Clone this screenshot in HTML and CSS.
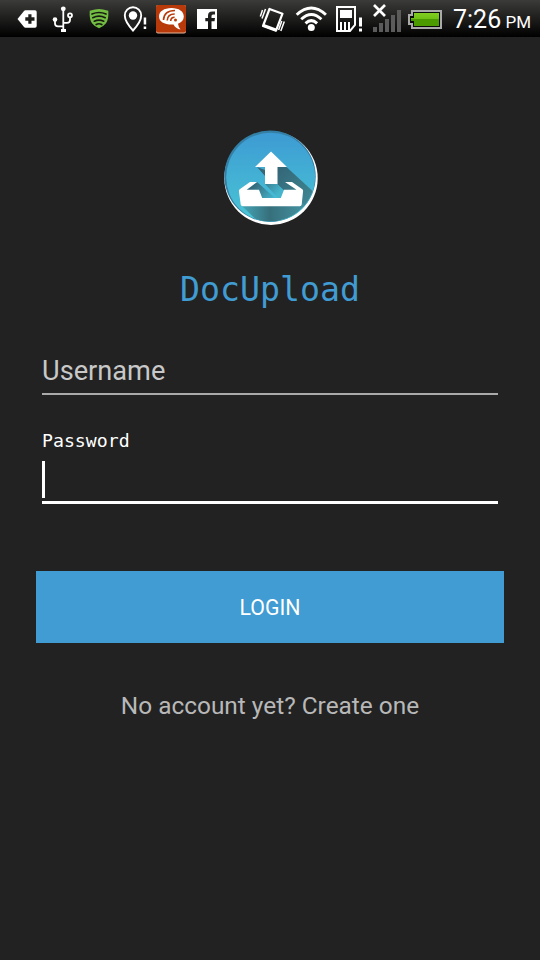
FILE: index.html
```html
<!DOCTYPE html>
<html lang="en">
<head>
<meta charset="utf-8">
<title>DocUpload</title>
<link rel="stylesheet" href="styles.css">
</head>
<body>
<header class="status">
  <div class="icons">
    <svg viewBox="9 0 36 37"><path fill="#fff" fill-rule="evenodd" d="M17.5 19 24 11q.5-.7 1.500-.7H35q1.700 0 1.700 1.700V26q0 1.700-1.700 1.700h-9.500q-1 0-1.500-.7ZM28.300 14.300v3h-3v3.400h3v3h3.200v-3h3v-3.400h-3v-3Z"/></svg>
    <svg viewBox="45 0 36 37"><g fill="none" stroke="#fff" stroke-width="1.800"><path d="M63.300 8v22M55 21v2.500q0 2.800 3 2.800h5.500M70 18v2q0 2.800-3 2.800h-3.500"/><circle cx="70" cy="15.300" r="2"/></g><path fill="#fff" d="M61 29h5v3h-5z"/><circle cx="63.300" cy="8.800" r="2.400" fill="#fff"/><circle cx="55" cy="19.500" r="2.300" fill="#fff"/></svg>
    <svg viewBox="81 0 36 37"><path fill="#74bd43" d="M99 9q3.500 0 9.300 1.800.5 9-2.300 12.500-2.700 3.500-7 5-4.300-1.500-7-5-2.800-3.500-2.300-12.500Q95.500 9 99 9Z"/><g fill="none" stroke="#171b12" stroke-width="1.700" stroke-linecap="round"><path d="M92 14q7-3 14 0M92.800 17.700q6.200-3 12.400 0M94.300 21.200q4.700-2.200 9.400 0M96.200 24.500q2.800-1.500 5.600 0"/></g></svg>
    <svg viewBox="117 0 36 37"><path fill="#222" stroke="#fff" stroke-width="1.900" d="M133 30.500Q124.800 21.500 124.800 15.500A8.200 8.200 0 0 1 141.200 15.500Q141.200 21.500 133 30.500Z"/><circle cx="133" cy="15.500" r="4.200" fill="#fff"/><path fill="#fff" d="M143.700 17.500h2.500v7h-2.500zM143.700 26.500h2.500V29h-2.500z"/></svg>
    <svg viewBox="153 0 36 37"><rect x="156" y="5" width="30" height="28.500" rx="2" fill="#e3b49a"/><rect x="156" y="5" width="30" height="27.500" rx="2" fill="#b83a0b"/><path fill="#fff" d="M171.500 8c7.500 0 12.300 3.500 12.300 8.500 0 3.500-2.300 6-5.800 7.300q.4 3.500 2.500 5.700-4.800-.8-7-5c-8.500.5-14.500-2.500-14.500-8 0-5 5-8.500 12.500-8.500Z"/><g fill="none" stroke="#b83a0b" stroke-width="1.600"><path d="M163.500 20q.5-9.500 11.500-9.500M167.200 20.500q.3-6.500 7.500-6.500M170.700 21q.2-3.700 3.900-3.700"/></g><circle cx="175.500" cy="20" r="1.500" fill="#b83a0b"/></svg>
    <svg viewBox="189 0 36 37"><path fill="#fff" d="M197 9h20v20h-5.500v-7.700h3l.5-3.300h-3.500v-2q0-1.500 1.500-1.500h2v-3h-2.700q-4.300 0-4.300 4.200V18h-2.700v3.300h2.700V29H197Z"/></svg>
  </div>
  <div class="icons system">
    <svg viewBox="252 0 38 37"><path fill="none" stroke="#fff" stroke-width="2.200" stroke-linejoin="round" d="m269.500 9 13 4.700-6.500 17-13-4.700Z"/><path fill="#fff" d="m264 24 13 4.700-.8 2.800-13.500-5Z"/><path fill="none" stroke="#fff" stroke-width="1.500" d="m265.500 9-3.500 9.500M262.500 10l-2.200 6.500M284.300 21.500l-3.500 9.500M281.800 21l-3.200 9"/></svg>
    <svg viewBox="290 0 38 37"><g fill="none" stroke="#fff" stroke-width="2.900"><path d="M296.700 14.700q14.600-13.500 29.200 0M301.200 19.200q10.100-9.500 20.200 0M305.500 23.400q5.800-5.500 11.600 0"/></g><circle cx="311.300" cy="27.500" r="3.500" fill="#fff"/></svg>
    <svg viewBox="328 0 38 37"><path fill="none" stroke="#fff" stroke-width="2" d="M337 7h18v18l-5 6h-13Z"/><path fill="#fff" d="M340 10h12v8h-12zM340 22h2v8h-2zM344 22h2v8h-2zM348 22h2v8h-2zM359 17.500h3v9h-3zM359 28.500h3v3h-3z"/></svg>
    <svg viewBox="366 0 38 37"><path fill="#5b5b5b" d="M373 27h4v5h-4zM379 23h4v9h-4zM385 19h4v13h-4zM391 15h4v17h-4zM397 10h4v22h-4z"/><path stroke="#fff" stroke-width="2.700" d="m374 5 11 11M385 5l-11 11"/></svg>
    <svg viewBox="404 0 38 37"><defs><linearGradient id="charge" x2="0" y2="1"><stop stop-color="#82cf22"/><stop offset=".5" stop-color="#6dbd12"/><stop offset=".5" stop-color="#4b9b00"/><stop offset="1" stop-color="#4b9b00"/></linearGradient></defs><path fill="#0a0a0a" stroke="#aaa" stroke-width="2" d="M412 11h29v17h-29v-4h-3v-9h3Z"/><path fill="url(#charge)" d="M414 13h25v13h-25v-5h-3v-3h3Z"/></svg>
  </div>
  <div class="clock">7:26 <span class="meridiem">PM</span></div>
</header>
<main class="login">
  <svg class="logo" viewBox="215 122 112 110">
    <defs>
      <linearGradient id="sky" x2="0" y2="1"><stop stop-color="#3d9bd3"/><stop offset="1" stop-color="#49c6d5"/></linearGradient>
      <linearGradient id="shade" gradientUnits="userSpaceOnUse" x1="280" y1="170" x2="312" y2="202"><stop stop-color="#346879"/><stop offset="1" stop-color="#3f8793"/></linearGradient>
      <linearGradient id="inner" gradientUnits="userSpaceOnUse" x1="258" y1="180" x2="276" y2="196"><stop stop-color="#346879"/><stop offset="1" stop-color="#45b5cc"/></linearGradient>
      <linearGradient id="under" gradientUnits="userSpaceOnUse" x1="245" y1="210" x2="300" y2="210"><stop stop-color="#42a0b0"/><stop offset=".45" stop-color="#376f7c"/><stop offset="1" stop-color="#438e9c"/></linearGradient>
      <clipPath id="disc"><circle cx="270" cy="176.500" r="45"/></clipPath>
    </defs>
    <circle cx="271" cy="178.200" r="46.700" fill="#fff"/>
    <circle cx="270" cy="176.300" r="45.700" fill="#347fa5"/>
    <circle cx="270.700" cy="177.200" r="44.500" fill="url(#sky)"/>
    <g clip-path="url(#disc)">
      <path fill="url(#shade)" d="m286.500 167 43.500 40v25l-53-48V167Z"/>
      <path fill="url(#inner)" d="M265 184v-14l-8-3 8 9ZM257 182l18 16h-13l-15-8.300ZM265 184h12l9 9-3 5h-5Z"/>
      <path fill="url(#under)" d="m241 205 28 27h58l-25-30Z"/>
    </g>
    <path fill="#fff" d="m271 151.500 16 15.500h-9.500v17H265v-17h-10Z"/>
    <path fill="#fff" d="M250 182h7l-10.500 7.700H259l3.200 8.300h18.600l3.200-8.300h12.500L285 182h7l10.300 7.200q.9.700.8 1.800l-1.400 13.500q-.3 1.800-2 1.800h-57q-1.700 0-2-1.800L238.900 191q-.1-1.100.8-1.800Z"/>
  </svg>
  <h1 class="title">DocUpload</h1>
  <div class="field username">Username</div>
  <label class="label">Password</label>
  <div class="field password"><span class="caret"></span></div>
  <button class="submit">LOGIN</button>
  <a class="signup">No account yet? Create one</a>
</main>
</body>
</html>
```
FILE: styles.css
```css
* { box-sizing: border-box; }
body {
  margin: 0;
  min-height: 960px;
  background: #222;
  color: #fff;
  font-family: Roboto, sans-serif;
}
.status {
  display: flex;
  height: 37px;
  padding-left: 9px;
  background: linear-gradient(#3b3b39, #000);
}
.icons { display: flex; }
.icons svg { width: 36px; height: 37px; flex: none; }
.system { margin-left: 27px; }
.system svg { width: 38px; }
.clock {
  margin-left: 11px;
  font-size: 25px;
  line-height: 39px;
  white-space: nowrap;
}
.meridiem { font-size: 17px; margin-left: -2px; }
.login {
  display: flex;
  flex-direction: column;
  padding: 85px 36px 0;
}
.logo { width: 112px; height: 110px; margin-left: 179px; }
.title {
  margin: 38px 0 0;
  font: 33.200px/40px "DejaVu Sans Mono", monospace;
  color: #409cd2;
  text-align: center;
}
.field { margin: 0 6px; }
.username {
  height: 46px;
  margin-top: 39px;
  border-bottom: 2px solid #aaa;
  font-size: 27.200px;
  line-height: 44px;
  color: #c8c8c8;
}
.label {
  margin: 34px 6px 0;
  font: 18.200px/24px "DejaVu Sans Mono", monospace;
}
.password {
  height: 51px;
  padding-top: 8px;
  border-bottom: 3px solid #fff;
}
.caret { display: block; width: 3px; height: 37px; background: #fff; }
.submit {
  height: 72px;
  margin-top: 67px;
  border: 0;
  padding: 2px 0 0;
  background: #409cd2;
  color: #fff;
  font: 21.300px/70px Roboto, sans-serif;
}
.signup {
  margin-top: 47px;
  font-size: 24.400px;
  line-height: 32px;
  color: #b8b8b8;
  text-align: center;
}
```
